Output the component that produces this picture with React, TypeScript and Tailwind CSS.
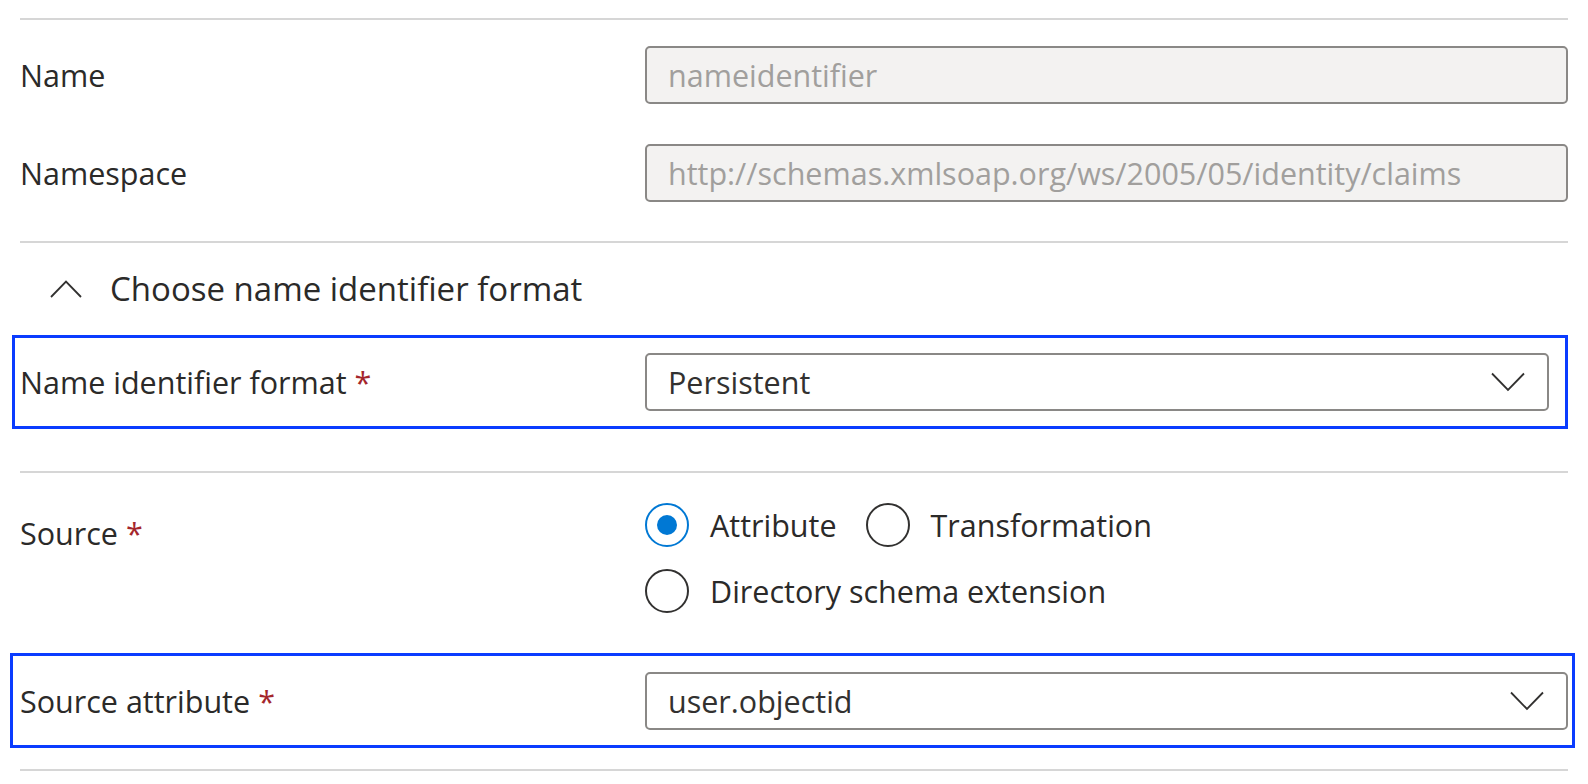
import React from "react";

const FONT = { fontFamily: '"Open Sans", "Noto Sans", sans-serif' };

function ChevronDown() {
  return (
    <svg width="34" height="20" viewBox="0 0 34 20" fill="none" className="shrink-0">
      <path d="M1 1.5 L17 18 L33 1.5" stroke="#323130" strokeWidth="1.8" />
    </svg>
  );
}

function ChevronUp() {
  return (
    <svg width="32" height="18" viewBox="0 0 32 18" fill="none" className="shrink-0">
      <path d="M1 17 L16 1.5 L31 17" stroke="#323130" strokeWidth="1.8" />
    </svg>
  );
}

function Required() {
  return <span className="text-[#a4262c] ml-[8px]">*</span>;
}

function Divider() {
  return <div className="h-[2px] bg-[#d6d6d6]" />;
}

function Radio({ checked, label }: { checked?: boolean; label: string }) {
  return (
    <label className="flex items-center gap-[21px]">
      <span
        className={`w-[44px] h-[44px] rounded-full border-2 flex items-center justify-center shrink-0 ${
          checked ? "border-[#0078d4]" : "border-[#323130]"
        }`}
      >
        {checked && <span className="w-[20px] h-[20px] rounded-full bg-[#0078d4]" />}
      </span>
      <span>{label}</span>
    </label>
  );
}

function ReadOnlyInput({ value }: { value: string }) {
  return (
    <div className="flex-1 h-[58px] rounded-[5px] border-2 border-[#8a8886] bg-[#f3f2f1] flex items-center pl-[21px] text-[#a19f9d]">
      {value}
    </div>
  );
}

function Dropdown({ value }: { value: string }) {
  return (
    <div className="flex-1 h-[58px] rounded-[5px] border-2 border-[#8a8886] bg-white flex items-center justify-between pl-[21px] pr-[22px] text-[#323130]">
      <span>{value}</span>
      <ChevronDown />
    </div>
  );
}

export default function App() {
  return (
    <div className="w-full h-[784px] bg-white px-[20px] text-[30.5px] leading-[40px] text-[#2b2a29] overflow-hidden" style={FONT}>
      <div className="pt-[18px]">
        <Divider />
      </div>

      {/* name / namespace */}
      <div className="flex items-center mt-[26px]">
        <div className="w-[625px]">Name</div>
        <ReadOnlyInput value="nameidentifier" />
      </div>
      <div className="flex items-center mt-[40px]">
        <div className="w-[625px]">Namespace</div>
        <ReadOnlyInput value="http://schemas.xmlsoap.org/ws/2005/05/identity/claims" />
      </div>

      <div className="mt-[39px]">
        <Divider />
      </div>

      {/* section header */}
      <div className="flex items-center h-[40px] mt-[26px] pl-[30px] gap-[28px] text-[33px]">
        <ChevronUp />
        <span>Choose name identifier format</span>
      </div>

      {/* format */}
      <div className="flex items-center mt-[26px] -ml-[8px] border-[3px] border-[#0a3cff] pl-[5px] pr-[16px] py-[15px]">
        <div className="w-[625px]">
          Name identifier format
          <Required />
        </div>
        <Dropdown value="Persistent" />
      </div>

      <div className="mt-[42px]">
        <Divider />
      </div>

      {/* source */}
      <div className="flex mt-[30px]">
        <div className="w-[625px] pt-[10px]">
          Source
          <Required />
        </div>
        <div className="flex flex-col gap-[22px]">
          <div className="flex items-center gap-[29px]">
            <Radio checked label="Attribute" />
            <Radio label="Transformation" />
          </div>
          <Radio label="Directory schema extension" />
        </div>
      </div>

      {/* source attribute */}
      <div className="flex items-center mt-[40px] -ml-[10px] -mr-[7px] border-[3px] border-[#0a3cff] pl-[7px] pr-[4px] pt-[16px] pb-[15px]">
        <div className="w-[625px]">
          Source attribute
          <Required />
        </div>
        <Dropdown value="user.objectid" />
      </div>

      <div className="mt-[21px]">
        <Divider />
      </div>
    </div>
  );
}
